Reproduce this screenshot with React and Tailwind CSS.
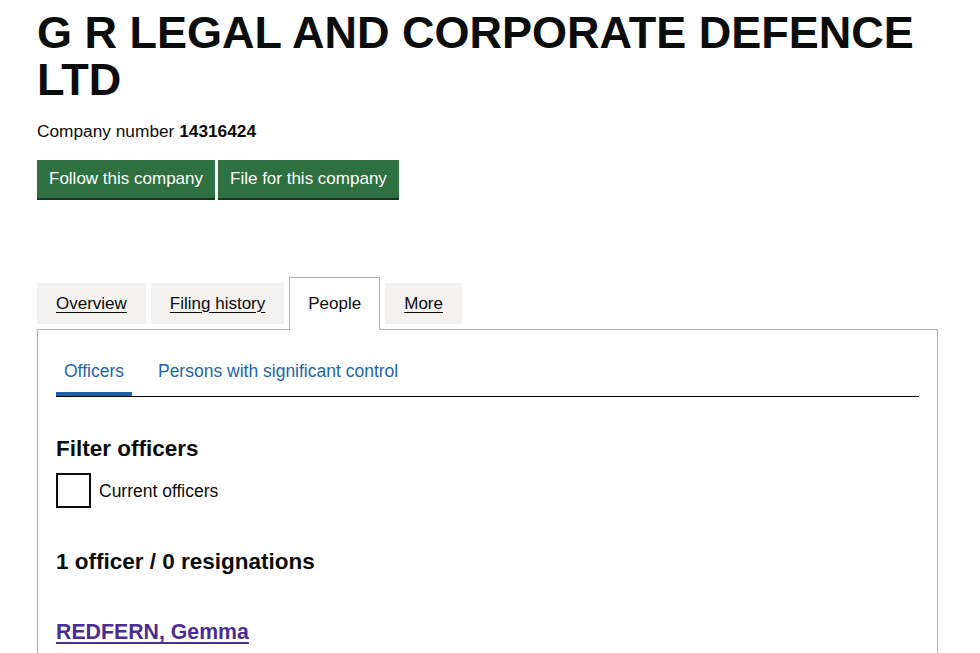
import React from "react";

const tabs = [
  { label: "Overview" },
  { label: "Filing history" },
  { label: "People", active: true },
  { label: "More" },
];

const App = () => {
  return (
    <div className="relative min-h-screen overflow-hidden bg-white font-['Liberation_Sans',Arial,sans-serif] text-[#0b0c0c]">
      <div className="ml-[37px] w-[901px]">
        {/* HEADER */}
        <h1 className="mt-[9px] text-[45px] font-bold leading-[47px]">
          G R LEGAL AND CORPORATE DEFENCE LTD
        </h1>
        <p className="mt-[18px] text-[17.3px] leading-[20px]">
          Company number <strong className="font-bold">14316424</strong>
        </p>

        <div className="mt-[19px] flex gap-[3px]">
          <button className="bg-[#2e703f] px-[12px] py-[9px] text-[17px] leading-[20px] text-white shadow-[0_2px_0_#17361f]">
            Follow this company
          </button>
          <button className="bg-[#2e703f] px-[12px] py-[9px] text-[17px] leading-[20px] text-white shadow-[0_2px_0_#17361f]">
            File for this company
          </button>
        </div>

        {/* TABS */}
        <div className="mt-[79px] flex items-end gap-[5px]">
          {tabs.map((tab) =>
            tab.active ? (
              <div
                key={tab.label}
                className="relative z-10 -mb-px h-[53px] border border-b-0 border-[#b1b4b6] bg-white px-[18px] pt-[16px] text-[17px] leading-[20px]"
              >
                {tab.label}
              </div>
            ) : (
              <a
                key={tab.label}
                href="#"
                className="mb-[5px] flex h-[41px] items-center bg-[#f3f2f1] px-[19px] text-[17px] leading-[20px] underline decoration-1 underline-offset-[3px]"
              >
                {tab.label}
              </a>
            )
          )}
        </div>

        {/* PANEL */}
        <div className="min-h-[420px] border border-[#b1b4b6] px-[18px] pt-[20px]">
          <div className="flex gap-[18px] border-b border-black">
            <a
              href="#"
              className="border-b-4 border-[#1d5fa5] px-[8px] pb-[11px] pt-[11px] text-[17.5px] leading-[20px] text-[#1d65ab]"
            >
              Officers
            </a>
            <a
              href="#"
              className="px-[8px] pb-[15px] pt-[11px] text-[17.5px] leading-[20px] text-[#1d65ab]"
            >
              Persons with significant control
            </a>
          </div>

          <h2 className="mt-[39px] text-[22.5px] font-bold leading-[26px]">
            Filter officers
          </h2>
          <label className="mt-[11px] flex items-center gap-[8px]">
            <span className="block h-[35px] w-[35px] border-2 border-[#0b0c0c] bg-white"></span>
            <span className="text-[17.5px] leading-[20px]">Current officers</span>
          </label>

          <h2 className="mt-[41px] text-[22.5px] font-bold leading-[26px]">
            1 officer / 0 resignations
          </h2>

          <a
            href="#"
            className="mt-[45px] block text-[21.3px] font-bold leading-[25px] text-[#4c2c92] underline decoration-2 underline-offset-[3px]"
          >
            REDFERN, Gemma
          </a>
        </div>
      </div>

      {/* screenshot edge shading */}
      <div className="pointer-events-none absolute bottom-0 left-0 h-[34px] w-full bg-gradient-to-b from-transparent to-[#e6e6e6]/80"></div>
    </div>
  );
};

export default App;
